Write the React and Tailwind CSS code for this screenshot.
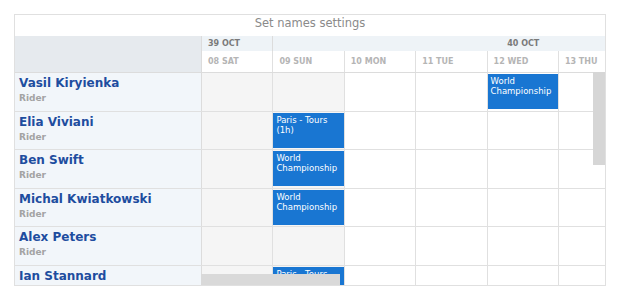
import React from 'react';

const days = ['08 SAT', '09 SUN', '10 MON', '11 TUE', '12 WED', '13 THU'];

const riders = [
  { name: 'Vasil Kiryienka', events: { 4: 'World Championship' } },
  { name: 'Elia Viviani', events: { 1: 'Paris - Tours (1h)' } },
  { name: 'Ben Swift', events: { 1: 'World Championship' } },
  { name: 'Michal Kwiatkowski', events: { 1: 'World Championship' } },
  { name: 'Alex Peters', events: {} },
  { name: 'Ian Stannard', events: { 1: 'Paris - Tours' } },
];

function RiderRow({ rider }) {
  return (
    <div className="flex h-[38.5px] shrink-0 border-b border-[#e0e0e0]">
      {/* name cell */}
      <div className="w-[187px] shrink-0 border-r border-[#dcdcdc] bg-[#f2f6fa] pl-[4px] pt-[3px]">
        <div className="text-[12px] leading-[15px] font-bold text-[#1e4d9f]">{rider.name}</div>
        <div className="text-[9px] leading-[14px] font-bold text-[#a3a3a3]">Rider</div>
      </div>
      {days.map((d, i) => (
        <div
          key={d}
          className={
            'w-[71.4px] shrink-0 border-r border-[#e0e0e0] ' +
            (i < 2 ? 'bg-[#f5f5f5]' : 'bg-white')
          }
        >
          {rider.events[i] && (
            <div className="mt-[1px] h-[35px] bg-[#1976d2] px-[3px] pt-[2px] text-[8.5px] leading-[10px] text-white">
              {rider.events[i]}
            </div>
          )}
        </div>
      ))}
    </div>
  );
}

export default function App() {
  return (
    <div className="w-[620px] h-[300px] bg-white pl-[14px] pt-[14px] font-['DejaVu_Sans',sans-serif]">
      <div className="relative flex h-[272px] w-[592px] flex-col overflow-hidden border border-[#e0e0e0]">
        {/* title */}
        <div className="h-[21px] shrink-0 text-center text-[11.5px] leading-[16px] text-[#8a8a8a]">
          Set names settings
        </div>

        {/* header */}
        <div className="flex shrink-0">
          <div className="h-[37px] w-[187px] shrink-0 border-r border-b border-[#dcdcdc] bg-[#e6eaee]" />
          <div className="flex flex-col overflow-hidden">
            <div className="flex h-[15px] shrink-0 bg-[#eef3f7] text-[8px] font-bold leading-[15px] text-[#7a7a7a]">
              <div className="w-[71.4px] shrink-0 border-r border-[#dcdcdc] pl-[6px]">39 OCT</div>
              <div className="w-[499.8px] shrink-0 text-center">40 OCT</div>
            </div>
            <div className="flex h-[22px] shrink-0 border-b border-[#dcdcdc] bg-white text-[8px] font-bold leading-[21px] text-[#b5b5b5]">
              {days.map((d) => (
                <div key={d} className="w-[71.4px] shrink-0 border-r border-[#e0e0e0] pl-[6px]">
                  {d}
                </div>
              ))}
            </div>
          </div>
        </div>

        {/* body */}
        <div className="flex flex-col">
          {riders.map((r) => (
            <RiderRow key={r.name} rider={r} />
          ))}
        </div>

        {/* scrollbars */}
        <div className="absolute right-0 top-[57px] h-[93px] w-[12px] bg-[#d6d6d6]" />
        <div className="absolute bottom-0 left-[186px] h-[11px] w-[139px] bg-[#d9d9d9]" />
      </div>
    </div>
  );
}
